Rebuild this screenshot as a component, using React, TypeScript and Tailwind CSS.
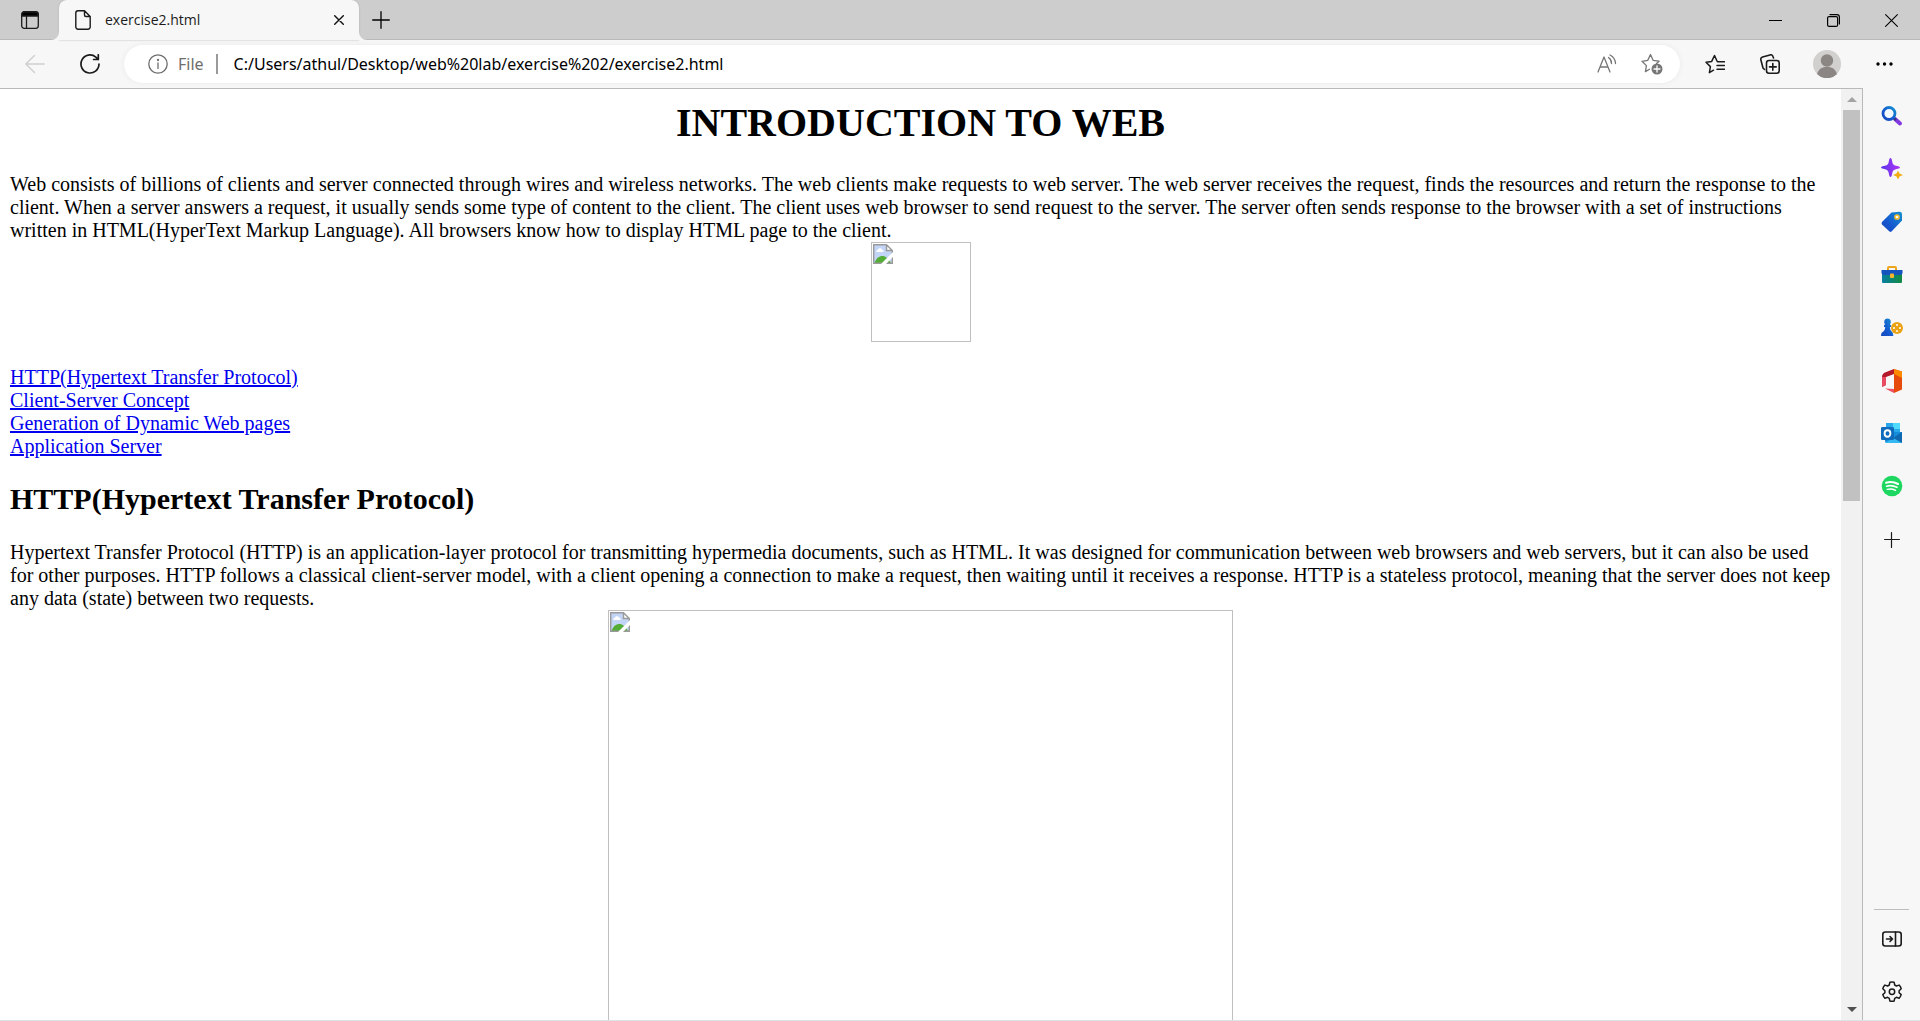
import type { ReactNode } from "react";

const INTRO =
  "Web consists of billions of clients and server connected through wires and wireless networks. The web clients make requests to web server. The web server receives the request, finds the resources and return the response to the client. When a server answers a request, it usually sends some type of content to the client. The client uses web browser to send request to the server. The server often sends response to the browser with a set of instructions written in HTML(HyperText Markup Language). All browsers know how to display HTML page to the client.";
const HTTP =
  "Hypertext Transfer Protocol (HTTP) is an application-layer protocol for transmitting hypermedia documents, such as HTML. It was designed for communication between web browsers and web servers, but it can also be used for other purposes. HTTP follows a classical client-server model, with a client opening a connection to make a request, then waiting until it receives a response. HTTP is a stateless protocol, meaning that the server does not keep any data (state) between two requests.";
const LINKS = [
  "HTTP(Hypertext Transfer Protocol)",
  "Client-Server Concept",
  "Generation of Dynamic Web pages",
  "Application Server",
];

function Btn({ label, className, children }: { label: string; className: string; children: ReactNode }) {
  return (
    <button type="button" aria-label={label} className={`flex shrink-0 items-center justify-center ${className}`}>
      {children}
    </button>
  );
}

function Line({ size = 20, width = 1.4, children }: { size?: number; width?: number; children: ReactNode }) {
  return (
    <svg width={size} height={size} viewBox={`0 0 ${size} ${size}`} fill="none" stroke="currentColor" strokeWidth={width} strokeLinecap="round" strokeLinejoin="round">
      {children}
    </svg>
  );
}

function BrokenImage({ className }: { className: string }) {
  return (
    <div role="img" aria-label="Missing picture" className={`mx-auto border border-[#c0c0c0] p-px ${className}`}>
      <svg width="20" height="20" viewBox="0 0 20 20">
        <path d="M.7.7h12.800l5.800 5.800v12.800H.7z" fill="#c3d5f7" />
        <path d="M3.500 8a1.600 1.600 0 0 1 1.300-2.300 2.400 2.400 0 0 1 4.400 0A1.600 1.600 0 0 1 10.500 8z" fill="#fff" />
        <path d="M1.500 19c1.500-4.500 4.500-7 8-7 3 0 5.500 2 8.500 7z" fill="#54ad36" />
        <path d="M13.500.7v5.800h5.800z" fill="#fff" />
        <path d="M.7 19.300V.7h12.800l5.800 5.800v12.800zM13.500 1v5.500h5.500" fill="none" stroke="#9a9a9a" strokeWidth="1.400" />
        <path d="M9.500 21 21 9.500" stroke="#fff" strokeWidth="3.600" />
      </svg>
    </div>
  );
}

function TabBar() {
  return (
    <header className="flex h-10 shrink-0 items-stretch bg-[#cdcdcd] shadow-[inset_0_-1px_0_#b9b9b9]">
      <Btn label="Tab actions" className="w-[59px]">
        <svg width="18" height="18" viewBox="0 0 18 18" fill="none" stroke="#1b1b1b" strokeWidth="1.300">
          <rect x=".7" y=".7" width="16.600" height="16.600" rx="2.500" />
          <path d="M1 3.500A2.500 2.500 0 0 1 3.500 1h11A2.500 2.500 0 0 1 17 3.500V5H1z" fill="#000" />
          <path d="M5.500 5v12" />
        </svg>
      </Btn>
      <div className="relative flex w-[300px] items-center rounded-t-lg bg-[#f7f7f7] pl-4 shadow-[0_0_2px_#aaa]">
        <svg className="absolute bottom-0 -left-2" width="8" height="8"><path d="M8 0v8H0a8 8 0 0 0 8-8" fill="#f7f7f7" /></svg>
        <svg className="absolute -right-2 bottom-0" width="8" height="8"><path d="M0 0v8h8a8 8 0 0 1-8-8" fill="#f7f7f7" /></svg>
        <svg width="16" height="20" viewBox="0 0 16 20" fill="none" stroke="#1b1b1b" strokeWidth="1.400" strokeLinejoin="round">
          <path d="M3 .8h6.500L15.200 6.500V17a2.200 2.200 0 0 1-2.200 2.200H3A2.200 2.200 0 0 1 .8 17V3A2.200 2.200 0 0 1 3 .8zM9.500 1v4a1.500 1.500 0 0 0 1.500 1.500h4" />
        </svg>
        <span className="ml-3.5 grow text-sm text-[#1b1b1b]">exercise2.html</span>
        <Btn label="Close tab" className="mr-1 size-8">
          <Line size={10}><path d="m.7.7 8.600 8.600m0-8.600L.7 9.300" stroke="#111" /></Line>
        </Btn>
      </div>
      <Btn label="New tab" className="w-11">
        <Line size={18} width={1.3}><path d="M9 .7v16.600M.7 9h16.600" /></Line>
      </Btn>
      <div className="ml-auto flex">
        <Btn label="Minimize" className="w-[57px]"><svg width="13" height="1"><path d="M0 0h13v1H0z" /></svg></Btn>
        <Btn label="Restore" className="w-[58px]">
          <Line size={13} width={1.2}><rect x=".6" y="2.600" width="10" height="9.800" rx="1.500" /><path d="M3 .6h7A2.500 2.500 0 0 1 12.400 3v7" /></Line>
        </Btn>
        <Btn label="Close window" className="w-[58px]"><Line size={13} width={1.1}><path d="m.6.6 11.800 11.800m0-11.800L.6 12.400" /></Line></Btn>
      </div>
    </header>
  );
}

const STAR = "M8.500 16.200 4.400 18.600l1-6L1 8.300l5.700-.9L9.500 1.500l2.600 5.800";

function Toolbar() {
  return (
    <nav className="flex h-12 shrink-0 items-center bg-[#f7f7f7] pr-2 pl-3 text-[#1b1b1b]">
      <Btn label="Back" className="h-9 w-[46px] text-[#cfcfcf]">
        <Line><path d="M19.300 10H.8M9.500 1.500.8 10l8.700 8.500" /></Line>
      </Btn>
      <Btn label="Refresh" className="ml-3 h-9 w-10">
        <Line width={1.7}><path d="M19 10a9 9 0 1 1-3.200-6.900L18.300 5.500M18.300.8v4.700h-4.700" /></Line>
      </Btn>
      <div className="ml-3.5 flex h-[38px] grow items-center rounded-full bg-white pl-6 font-['Noto_Sans',sans-serif] shadow-[0_0_5px_#e8e8e8]">
        <button type="button" className="flex items-center gap-2.5 text-base text-[#6e6e6e]">
          <Line width={1.3}><circle cx="10" cy="10" r="9.200" /><path d="M10 9v5.500" /><circle cx="10" cy="6" r=".5" fill="currentColor" /></Line>
          File
        </button>
        <span className="mr-4 ml-3 h-5 w-0.5 bg-[#9a9a9a]" />
        <input aria-label="Address" readOnly value="C:/Users/athul/Desktop/web%20lab/exercise%202/exercise2.html" className="min-w-0 grow text-base text-black outline-none" />
        <Btn label="Read aloud" className="h-9 w-[45px] text-[#767676]">
          <Line width={1.3}><path d="m1 18 6-15 6 15M3 13h8M11.500 3.500a7 7 0 0 1 3 6M13 1a10 10 0 0 1 5.500 8.500" /></Line>
        </Btn>
        <Btn label="Add to favorites" className="mr-1.5 h-9 w-[45px] text-[#767676]">
          <Line size={22} width={1.3}>
            <path d={STAR + "l6 .9-2.600 2.300"} />
            <circle cx="16" cy="16" r="5.500" fill="#767676" stroke="none" />
            <path d="M16 13v6m-3-3h6" stroke="#fff" />
          </Line>
        </Btn>
      </div>
      <Btn label="Favorites" className="ml-2 h-9 w-[54px]">
        <Line width={1.5}><path d={STAR + "M12.500 7.800h7M12 11.500h7.500M12 15.200h7.500"} /></Line>
      </Btn>
      <Btn label="Collections" className="h-9 w-14">
        <Line width={1.6}><path d="M4.500 15.500 3 14 .9 6A2.500 2.500 0 0 1 2.500 3L10 .9A2.500 2.500 0 0 1 13 2.600l.5 1.400" /><rect x="6.500" y="6.500" width="12.700" height="12.700" rx="2.500" /><path d="M12.800 9.500v6.700m-3.300-3.300h6.700" /></Line>
      </Btn>
      <Btn label="Profile" className="h-9 w-[58px]">
        <svg width="28" height="28" viewBox="0 0 28 28"><circle cx="14" cy="14" r="14" fill="#d2d0ce" /><circle cx="14" cy="10.500" r="6.200" fill="#8b8683" /><path d="M4 24a10.500 10.500 0 0 1 20 0 14 14 0 0 1-20 0" fill="#8b8683" /></svg>
      </Btn>
      <Btn label="Settings and more" className="h-9 w-[56px]">
        <svg width="17" height="4" viewBox="0 0 17 4"><circle cx="2" cy="2" r="1.700" /><circle cx="8.500" cy="2" r="1.700" /><circle cx="15" cy="2" r="1.700" /></svg>
      </Btn>
    </nav>
  );
}

const SIDE: { label: string; art: ReactNode }[] = [
  {
    label: "Search",
    art: (
      <>
        <path d="m14 14 5 4.500" stroke="#8339e0" strokeWidth="4" strokeLinecap="round" />
        <path d="m12.500 12.500 2.500 2.500" stroke="#343a80" strokeWidth="2.500" />
        <circle cx="8" cy="8.500" r="6" fill="#f2f8ff" stroke="url(#blue)" strokeWidth="2.800" />
      </>
    ),
  },
  {
    label: "Discover",
    art: (
      <>
        <path d="M9.500 0c1 0 1.300 1.500 1.800 4 .5 2.500 1.200 3.200 3.700 3.800 2.500.5 4 .9 4 1.700s-1.500 1.200-4 1.700c-2.500.6-3.200 1.300-3.700 3.800s-.8 4-1.800 4-1.300-1.500-1.800-4-1.200-3.200-3.700-3.800S0 10.300 0 9.500s1.500-1.200 4-1.700c2.500-.6 3.200-1.300 3.700-3.800S8.500 0 9.500 0" fill="url(#purple)" />
        <path d="m17 12.500 1.500 3 3.500 1.500-3.500 1.500-1.500 3-1.500-3-3.500-1.500 3.500-1.500z" fill="#f2ad12" />
      </>
    ),
  },
  {
    label: "Shopping",
    art: (
      <>
        <path d="M10.500 1.500 18.500.7Q21 .7 21 3v6.500l-10.500 11q-1 .8-2 0L1 13.500q-1-1.200 0-2.500z" fill="url(#blue)" />
        <circle cx="16" cy="6" r="2.100" fill="#fff" stroke="#f5bd2b" strokeWidth="1.500" />
      </>
    ),
  },
  {
    label: "Tools",
    art: (
      <>
        <path d="M7 6V4Q7 3 8 3h6q1 0 1 1v2" fill="none" stroke="#eda51b" strokeWidth="2" />
        <rect x="1" y="8" width="20" height="11" rx="1" fill="url(#green)" />
        <path d="M.5 6h21v2.500q0 2.500-3 2.500h-15q-3 0-3-2.500z" fill="#1553bd" />
        <rect x="9" y="9.500" width="4" height="4.500" rx="1" fill="#f7b52c" />
      </>
    ),
  },
  {
    label: "Games",
    art: (
      <>
        <circle cx="16" cy="11" r="6" fill="#eaa315" />
        <g fill="#fff"><circle cx="16" cy="8" r="1" /><circle cx="19" cy="11" r="1" /><circle cx="16" cy="14" r="1" /><circle cx="13" cy="11" r="1" /></g>
        <path d="M4 8Q1.500 2 6.500 1.500 11.500 2 9 8h1v2H8.800q0 3.500 2.700 5.500.8 1 .8 3.500H0q0-3 1-3.500 3.200-2 3.200-5.500H3V8z" fill="url(#blue)" />
      </>
    ),
  },
  {
    label: "Office",
    art: (
      <>
        <path d="M13-1 21 1.500v18L13 23z" fill="#e64a0c" />
        <path d="M13-1 4 2.500Q1 4 1 7v10l4-2V7l8-3z" fill="#b5182a" />
        <path d="M1 7v10l4-2V7z" fill="#e84b62" />
        <path d="m4 18.500 9 .5v4z" fill="#ef5265" />
        <path d="M13-1 21 1.500V8l-8-4z" fill="#ff8a00" />
      </>
    ),
  },
  {
    label: "Outlook",
    art: (
      <>
        <path d="M5 0h14v12H5z" fill="#28a8ea" />
        <path d="M12 0h7v6h-7z" fill="#50d9ff" />
        <path d="M4 9h17v11H6q-2 0-2-2z" fill="#148ddb" />
        <path d="m21 9-9 6 9 5z" fill="#1068b0" />
        <path d="m4 20 8-5 9 5z" fill="#35b8f1" />
        <rect x="0" y="4" width="13" height="13" rx="1.300" fill="#0f6cbd" />
        <ellipse cx="6.500" cy="10.500" rx="2.900" ry="3.200" fill="none" stroke="#fff" strokeWidth="1.900" />
      </>
    ),
  },
  {
    label: "Spotify",
    art: (
      <>
        <circle cx="11" cy="10" r="10.300" fill="#1ed760" />
        <g fill="none" stroke="#fff" strokeLinecap="round">
          <path d="M5 6.700q6.500-1.700 12 1.300" strokeWidth="2" />
          <path d="M5.600 10.200q5.500-1.400 10.300 1.100" strokeWidth="1.700" />
          <path d="M6.200 13.400q4.500-1 8.300 1" strokeWidth="1.400" />
        </g>
      </>
    ),
  },
];

function Sidebar() {
  return (
    <aside className="flex w-[57px] shrink-0 flex-col items-center bg-[#f7f7f7] pt-px text-[#1b1b1b]">
      <svg width="0" height="0" className="absolute">
        <defs>
          <linearGradient id="blue" x1="1" y1="0" x2="0" y2="1"><stop stopColor="#1692d0" /><stop offset=".6" stopColor="#1457cf" /><stop offset="1" stopColor="#1748bd" /></linearGradient>
          <linearGradient id="purple"><stop stopColor="#5a35ea" /><stop offset="1" stopColor="#b036f4" /></linearGradient>
          <linearGradient id="green"><stop stopColor="#087fa3" /><stop offset="1" stopColor="#138a42" /></linearGradient>
        </defs>
      </svg>
      {SIDE.map((s) => (
        <Btn key={s.label} label={s.label} className="h-[53px] w-full">
          <svg width="22" height="22" viewBox="0 0 22 22" className="overflow-visible">{s.art}</svg>
        </Btn>
      ))}
      <Btn label="Customize" className="h-[54px] w-full"><Line size={16} width={1.2}><path d="M7.500 .6v14.800M.6 7.500h14.800" /></Line></Btn>
      <div className="mt-auto h-px w-[35px] bg-[#bdbdbd]" />
      <Btn label="Hide sidebar" className="h-[58px] w-full">
        <Line width={1.6}><rect x=".8" y="3" width="18.400" height="14" rx="2.500" /><path d="M13.500 3v14M4.500 10h6M8 7.500l2.500 2.500L8 12.500" /></Line>
      </Btn>
      <Btn label="Settings" className="mb-1 h-12 w-full">
        <Line size={22} width={1.5}>
          <path d="M8.900 1.200q2.100-.4 4.200 0l.6 2.800 1.700 1 2.700-.9q1.500 1.600 2.100 3.600L18.100 9.700v2l2.100 1.900q-.6 2-2.100 3.600l-2.700-.9-1.700 1-.6 2.800q-2.100.4-4.200 0l-.6-2.800-1.700-1-2.700.9q-1.500-1.600-2.100-3.600l2.100-1.900v-2L1.800 7.700q.6-2 2.100-3.600l2.700.9 1.700-1z" />
          <circle cx="11" cy="10.700" r="2.700" />
        </Line>
      </Btn>
    </aside>
  );
}

function Scrollbar() {
  return (
    <div className="flex w-[21px] shrink-0 flex-col items-center bg-[#f1f1f1]">
      <Btn label="Scroll up" className="h-[21px] w-full"><svg width="10" height="5"><path d="M0 5 5 0l5 5z" fill="#a3a3a3" /></svg></Btn>
      <div className="flex w-[17px] grow flex-col"><div className="h-[44%] bg-[#c1c1c1]" /></div>
      <Btn label="Scroll down" className="h-[21px] w-full"><svg width="10" height="5"><path d="m0 0 5 5 5-5z" fill="#505050" /></svg></Btn>
    </div>
  );
}

export default function App() {
  return (
    <div className="flex h-screen flex-col overflow-hidden border-b border-[#d9e3ea] bg-[#f7f7f7] font-['Open_Sans',sans-serif]">
      <TabBar />
      <Toolbar />
      <div className="flex min-h-0 grow">
        <div className="flex min-w-0 grow border-t border-r border-[#b9b9b9] bg-white">
          <main className="min-w-0 grow overflow-hidden px-2.5 pt-[11px] font-['Liberation_Serif',serif] text-[20px] leading-[23px] text-black">
            <h1 className="text-center text-[40px] leading-[46px] font-bold">INTRODUCTION TO WEB</h1>
            <p className="mt-[27px]">{INTRO}</p>
            <BrokenImage className="h-[100px] w-[100px]" />
            <ul className="mt-6">
              {LINKS.map((l) => (
                <li key={l}><a href="#http" className="text-[#0000ee] underline decoration-2">{l}</a></li>
              ))}
            </ul>
            <h2 id="http" className="mt-[23px] mb-6 text-[30px] leading-9 font-bold">{LINKS[0]}</h2>
            <p>{HTTP}</p>
            <BrokenImage className="h-[625px] w-[625px]" />
          </main>
          <Scrollbar />
        </div>
        <Sidebar />
      </div>
    </div>
  );
}
